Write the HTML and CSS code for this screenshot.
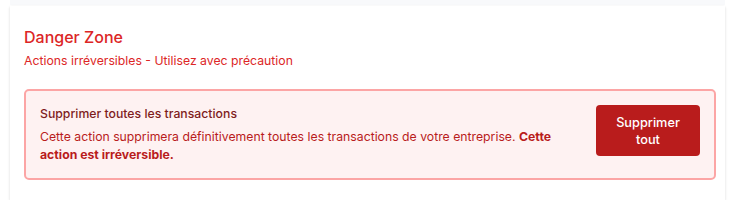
FILE: index.html
```html
<!DOCTYPE html>
<html lang="fr">
<head>
<meta charset="utf-8">
<link rel="stylesheet" href="styles.css">
</head>
<body>
<div class="top-strip"></div>
<section class="card">
  <h2 class="title">Danger Zone</h2>
  <p class="subtitle">Actions irréversibles - Utilisez avec précaution</p>
  <div class="danger-box">
    <div class="danger-text">
      <h3 class="danger-title">Supprimer toutes les transactions</h3>
      <p class="danger-desc">Cette action supprimera définitivement toutes les transactions de votre entreprise. <strong>Cette action est irréversible.</strong></p>
    </div>
    <button class="danger-btn">Supprimer<br>tout</button>
  </div>
</section>
</body>
</html>
```
FILE: styles.css
```css
* { box-sizing: border-box; }
html, body { margin: 0; padding: 0; background: #ffffff; }
body {
  font-family: Inter, "Noto Sans", sans-serif;
  padding: 0 5px 0 10px;
}
.top-strip {
  height: 5px;
  background: #f8f9fb;
}
.card {
  margin-top: 1px;
  background: #fff;
  box-shadow: 0 1px 3px rgba(0,0,0,0.10), 0 1px 2px rgba(0,0,0,0.06);
  padding: 20px 9px 20px 14px;
}
.title {
  margin: 0;
  font-size: 16px;
  font-weight: 500;
  line-height: 22px;
  color: #dc2626;
}
.subtitle {
  margin: 4px 0 0;
  font-size: 12.25px;
  line-height: 18px;
  color: #dc2626;
}
.danger-box {
  margin-top: 19px;
  background: #fef2f2;
  border: 2px solid #fca5a5;
  border-radius: 5px;
  padding: 14px;
  display: flex;
  align-items: flex-start;
  gap: 40px;
}
.danger-text { flex: 1; }
.danger-title {
  margin: 0;
  font-size: 12.25px;
  font-weight: 500;
  line-height: 18px;
  color: #7f1d1d;
}
.danger-desc {
  margin: 5px 0 0;
  font-size: 12.25px;
  line-height: 18px;
  color: #b91c1c;
}
.danger-desc strong { font-weight: 700; }
.danger-btn {
  flex: none;
  width: 104px;
  height: 51px;
  border: none;
  border-radius: 4px;
  background: #b91c1c;
  color: #fff;
  font-family: Inter, "Noto Sans", sans-serif;
  font-size: 12.75px;
  font-weight: 500;
  line-height: 17px;
  padding: 0;
}
```
